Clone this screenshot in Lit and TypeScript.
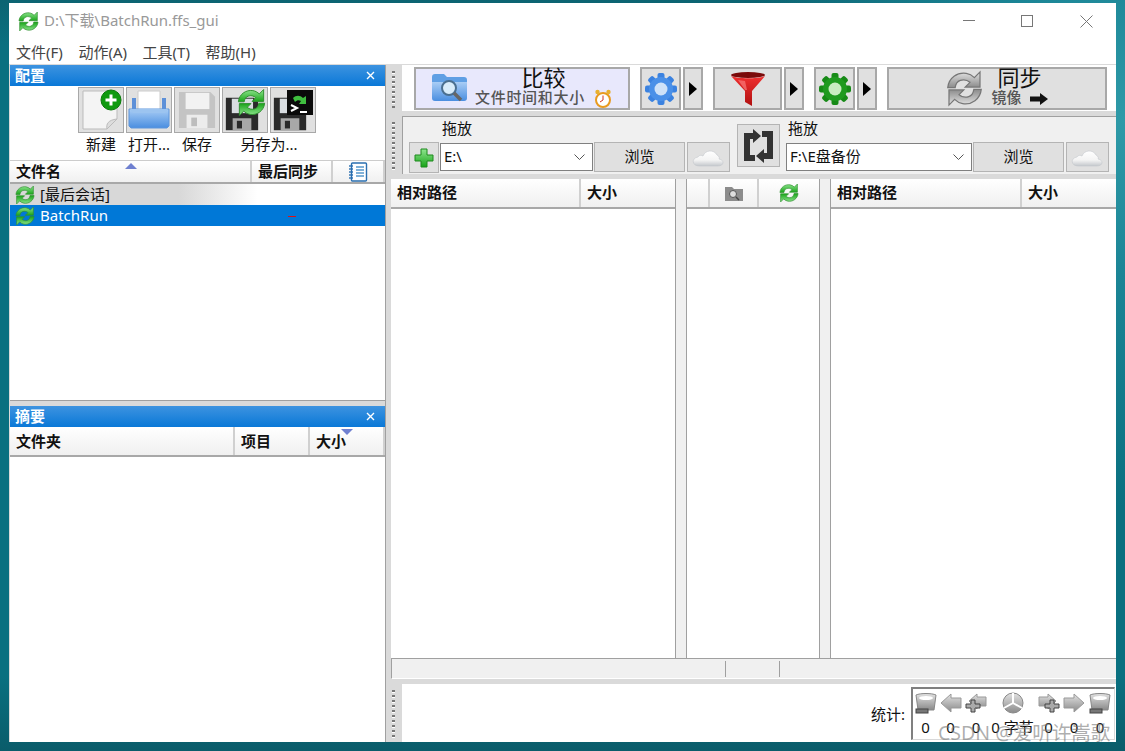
import { LitElement, html, svg, css } from "lit";
import { customElement } from "lit/decorators.js";

// shared sync arrows, top half is rotated for the bottom half
const arcPath =
  "M2.5 11.5C3 6 8 2.6 13 3.4c1.9.3 3.4 1.2 4.6 2.4L20.8 2.6v8.6h-8.4l2.7-2.7c-1.5-1.3-3.6-1.8-5.5-1.1-1.5.5-2.6 1.9-2.9 4.1z";
const syncPaths = (fill: string, stroke: string) => svg`
  <path fill=${fill} stroke=${stroke} stroke-width=".7" d=${arcPath}/>
  <path fill=${fill} stroke=${stroke} stroke-width=".7" transform="rotate(180 12 12)" d=${arcPath}/>
`;

const syncIcon = (size: number, gray = false) => html`<svg width=${size} height=${size} viewBox="1.5 1.5 21 21">
  ${gray ? syncPaths("url(#gsilver)", "#777") : syncPaths("url(#ggreen)", "#2f8f2f")}
</svg>`;

const gear = (outer: string, inner: string, hole: string) => {
  const teeth = [0, 45, 90, 135, 180, 225, 270, 315];
  return html`<svg width="34" height="34" viewBox="0 0 34 34">
    ${teeth.map((a) => svg`<rect x="13.5" y="1" width="7" height="8" rx="2" fill=${inner} transform="rotate(${a} 17 17)"/>`)}
    <circle cx="17" cy="17" r="12" fill=${outer}/>
    <circle cx="17" cy="17" r="6.5" fill=${hole}/>
  </svg>`;
};

// floppy in a 40x40 box, dark sides with a label on top and a shutter below
const floppy = (body: string, label: string, shutter: string, slot: string) => svg`
  <path fill=${body} d="M1 1h33l5 5v33H1z"/>
  <rect x="8" y="2" width="25" height="17" fill=${label}/>
  <rect x="9" y="25" width="22" height="14" fill=${shutter}/>
  <rect x="14" y="28" width="6" height="9" fill=${slot}/>
`;

const bucket = () => html`<svg width="22" height="23" viewBox="0 0 22 23">
  <path fill="url(#gsilver)" stroke="#888" d="M1 3c4-2 16-2 20 0l-2 15H3z"/>
  <ellipse cx="11" cy="6" rx="7" ry="2" fill="#fff"/>
  <rect x="1" y="17" width="12" height="4" fill="#777" stroke="#444"/>
</svg>`;

const arrowStat = (flip: boolean, plus: boolean) => html`<svg width="22" height="20" viewBox="0 0 22 20">
  <g transform=${flip ? "translate(22 0) scale(-1 1)" : ""}>
    ${plus
      ? svg`<path fill="url(#gsilver)" stroke="#999" d="M4 8L12 1v3h9v9h-9v3z"/>
            <path fill="#aaa" stroke="#444" d="M1 11h5V7h4v4h5v4h-5v4H6v-4H1z"/>`
      : svg`<path fill="url(#gsilver)" stroke="#999" d="M1 10L11 1v4h10v10H11v4z"/>`}
  </g>
</svg>`;

const cloud = () => html`<svg width="34" height="22" viewBox="0 0 34 22">
  <path fill="url(#gcloud)" stroke="#c4c8cc" stroke-width=".6" d="M7 20c-7 0-8-8-1-9 1-2 3-2 5-1 2-6 11-7 14-1 2 1 3 3 2 4 6 1 5 7-1 7z"/>
</svg>`;

@customElement("app-root")
export class AppRoot extends LitElement {
  static styles = css`
    :host {
      display: block;
      position: relative;
      width: 1125px;
      height: 751px;
      overflow: hidden;
      box-sizing: border-box;
      padding: 3px 9px 0 9px;
      font-family: "Noto Sans", "Noto Sans CJK SC", sans-serif;
      font-size: 15px;
      line-height: 20px;
      color: #111;
      background: radial-gradient(circle at 1125px 120px, #2f9aa8 0, #1b8596 12%, transparent 30%),
        linear-gradient(#0c6472, #0a7080 6%, #0a7080 90%, #0a5c6a);
    }
    svg { display: block; flex: none; }
    .defs { position: absolute; width: 0; height: 0; }
    .window {
      width: 1107px;
      height: 739px;
      background: #dadada;
      display: flex;
      flex-direction: column;
    }
    .title {
      height: 37px;
      background: #fff;
      display: flex;
      align-items: center;
      padding: 0 0 0 9px;
      color: #999;
      gap: 5px;
    }
    .title span { flex: 1; padding-bottom: 3px; }
    .winctl { display: flex; width: 153px; height: 100%; }
    .winctl svg { margin-top: 12px; }
    .menu {
      height: 24px;
      background: #fff;
      display: flex;
      gap: 15.6px;
      padding-left: 7px;
      align-items: center;
      color: #444;
    }
    .body { flex: 1; display: flex; min-height: 0; padding-top: 1px; }
    .left {
      width: 375px;
      margin-left: 1px;
      border-right: 1px solid #a0a0a0;
      display: flex;
      flex-direction: column;
      gap: 5px;
    }
    .pane { flex: none; background: #fff; display: flex; flex-direction: column; }
    .pane.config { height: 336px; border-bottom: 1px solid #a0a0a0; box-sizing: border-box; }
    .pane.summary { flex: 1; }
    .pane.summary .cell { padding-bottom: 0; }
    .caption {
      height: 21px;
      background: linear-gradient(#3d93e0, #0a78d7);
      color: #fff;
      display: flex;
      align-items: center;
      justify-content: space-between;
      padding: 0 10px 0 5px;
      font-weight: 700;
    }
    .caption span { padding-bottom: 2px; }
    .tools {
      height: 74px;
      box-sizing: border-box;
      padding: 1px 0 0 68px;
      display: grid;
      grid-template-columns: repeat(5, 46px);
      grid-template-rows: 46px auto;
      column-gap: 2px;
    }
    .tool {
      border: 1px solid #a8a8a8;
      background: #e0e0e0;
      display: flex;
      align-items: center;
      justify-content: center;
      box-sizing: border-box;
    }
    .tool-label { text-align: center; white-space: nowrap; line-height: 22px; }
    .span2 { grid-column: span 2; }
    .head {
      display: flex;
      background: linear-gradient(#fff, #f0f0f0);
      border-bottom: 2px solid #a8a8a8;
      box-sizing: border-box;
      position: relative;
      font-weight: 700;
    }
    .head.h24 { height: 24px; border-top: 1px solid #ccc; }
    .head.h30 { height: 30px; }
    .cell {
      display: flex;
      align-items: center;
      justify-content: flex-start;
      padding: 0 0 2px 6px;
      box-sizing: border-box;
      border-right: 2px solid #d0d0d0;
      flex: none;
      white-space: nowrap;
    }
    .cell:last-child { border-right: none; }
    .cell.center { justify-content: center; padding: 0; }
    .sort {
      position: absolute;
      width: 0;
      height: 0;
      border-left: 6px solid transparent;
      border-right: 6px solid transparent;
    }
    .sort.up { left: 115px; top: 2px; border-bottom: 6px solid #6f80d0; }
    .sort.down { left: 331px; top: 2px; border-top: 6px solid #6f80d0; }
    .row {
      height: 21px;
      display: flex;
      align-items: center;
      gap: 5px;
      padding-left: 5px;
      position: relative;
    }
    .row span { padding-bottom: 2px; }
    .row.last { background: linear-gradient(90deg, #d8d8d8 0, #d8d8d8 45%, #fff 66%); }
    .row.sel { background: #0078d7; color: #fff; }
    .dash { position: absolute; left: 278px; top: 11px; width: 8px; height: 1px; background: #e01010; }
    .right { flex: 1; display: flex; flex-direction: column; min-width: 0; margin-left: 1px; }
    .grip-col { width: 15px; flex: none; display: flex; justify-content: center; padding-right: 3px; box-sizing: border-box; }
    .grip {
      width: 3px;
      margin: 6px 0 3px 1px;
      background: repeating-linear-gradient(#777 0 2px, #fff 2px 3px, transparent 3px 5px);
    }
    .bar1 { height: 46px; display: flex; }
    .bar1-in {
      flex: 1;
      background: #fff;
      display: flex;
      gap: 2px;
      padding: 2px 9px 1px 12px;
    }
    .btn {
      border: 2px solid #a8a8a8;
      background: #e0e0e0;
      box-sizing: border-box;
      display: flex;
      align-items: center;
      justify-content: center;
      flex: none;
    }
    .compare { width: 216px; background: #e8e8fc; justify-content: flex-start; padding-left: 15px; gap: 7px; margin-right: 8px; }
    .stack { display: flex; flex-direction: column; align-items: center; margin-top: -7px; }
    .big { font-size: 22px; line-height: 24px; color: #111; }
    .small { display: flex; align-items: center; letter-spacing: 0.7px; color: #555; font-weight: 500; gap: 9px; height: 16px; }
    .small svg { margin-top: 3px; }
    .w41 { width: 41px; }
    .w20 { width: 20px; margin-right: 8px; }
    .w69 { width: 69px; }
    .tri { width: 0; height: 0; border-top: 7px solid transparent; border-bottom: 7px solid transparent; border-left: 8px solid #000; }
    .sync { width: 220px; gap: 8px; }
    .bar2 {
      height: 58px;
      margin-top: 5px;
      display: flex;
    }
    .bar2-in {
      flex: 1;
      background: #f0f0f0;
      border-top: 1px solid #a0a0a0;
      border-left: 1px solid #a0a0a0;
      box-sizing: border-box;
      padding: 0 7px 1px 6px;
      display: flex;
      align-items: flex-end;
    }
    .fbtn {
      border: 1px solid #b4b4b4;
      background: #e0e0e0;
      box-sizing: border-box;
      height: 31px;
      display: flex;
      align-items: center;
      justify-content: center;
      flex: none;
    }
    .plus { width: 30px; margin-right: 1px; }
    .folder { display: flex; flex-direction: column; }
    .drop { height: 25px; line-height: 23px; padding-left: 2px; }
    .frow { display: flex; align-items: flex-end; gap: 1px; }
    .combo {
      height: 28px;
      margin-bottom: 2px;
      background: #fff;
      border: 1px solid #808080;
      box-sizing: border-box;
      display: flex;
      align-items: center;
      justify-content: space-between;
      padding: 0 7px 0 3px;
    }
    .combo span { padding-bottom: 2px; }
    .combo.l { width: 153px; }
    .combo.r { width: 186px; }
    .browse { width: 91px; height: 30px; margin-bottom: 1px; padding-bottom: 2px; }
    .cl { width: 43px; height: 30px; margin-bottom: 1px; margin-left: 1px; }
    .swap { width: 43px; height: 43px; margin: 0 6px 6px 7px; align-self: flex-end; }
    .grid {
      flex: 1;
      margin-top: 5px;
      margin-left: 4px;
      display: flex;
      min-height: 0;
    }
    .col { background: #fff; flex: none; }
    .sep {
      width: 12px;
      flex: none;
      background: #f0f0f0;
      border-left: 1px solid #a0a0a0;
      border-right: 1px solid #a0a0a0;
      box-sizing: border-box;
    }
    .status {
      height: 21px;
      margin-left: 4px;
      background: #f0f0f0;
      border-top: 1px solid #a0a0a0;
      border-left: 1px solid #a0a0a0;
      border-bottom: 1px solid #fff;
      box-sizing: border-box;
      display: flex;
    }
    .status div { border-right: 1px solid #a0a0a0; margin: 2px 0 1px; box-sizing: border-box; }
    .bottom { height: 58px; margin-top: 5px; display: flex; }
    .bottom-in {
      flex: 1;
      background: #fff;
      display: flex;
      align-items: flex-start;
      justify-content: flex-end;
      gap: 6px;
      padding: 3px 1px 2px 0;
    }
    .stat-label { align-self: center; }
    .stats {
      width: 204px;
      height: 53px;
      box-sizing: border-box;
      border-top: 2px solid #808080;
      border-left: 2px solid #808080;
      border-right: 1px solid #d8d8d8;
      border-bottom: 1px solid #d8d8d8;
      display: grid;
      grid-template-columns: 25px 25px 26px 47px 25px 26px 26px;
      grid-template-rows: 28px auto;
      justify-items: center;
      align-items: center;
    }
    .stats span { color: #111; white-space: nowrap; margin-top: -3px; }
    .mark {
      position: absolute;
      left: 938px;
      top: 720px;
      font-size: 19.5px;
      line-height: 26px;
      color: rgba(120, 120, 120, 0.6);
      white-space: nowrap;
    }
  `;

  render() {
    return html`
      <svg class="defs">
        <defs>
          <linearGradient id="ggreen" x1="0" y1="0" x2="0" y2="1">
            <stop offset="0" stop-color="#8fe58f" /><stop offset="1" stop-color="#17a317" />
          </linearGradient>
          <linearGradient id="gsilver" x1="0" y1="0" x2="0" y2="1">
            <stop offset="0" stop-color="#e2e2e2" /><stop offset="1" stop-color="#8a8a8a" />
          </linearGradient>
          <linearGradient id="gcloud" x1="0" y1="0" x2="0" y2="1">
            <stop offset="0" stop-color="#fff" /><stop offset=".6" stop-color="#f4f4f4" /><stop offset="1" stop-color="#c4c8cc" />
          </linearGradient>
          <linearGradient id="gblue" x1="0" y1="0" x2="0" y2="1">
            <stop offset="0" stop-color="#a9cdf5" /><stop offset="1" stop-color="#4a8ee0" />
          </linearGradient>
          <linearGradient id="gred" x1="0" y1="0" x2="0" y2="1">
            <stop offset="0" stop-color="#f03030" /><stop offset="1" stop-color="#b01010" />
          </linearGradient>
        </defs>
      </svg>
      <div class="window">
        <div class="title">
          ${syncIcon(21)}
          <span>D:\\下载\\BatchRun.ffs_gui</span>
          <div class="winctl">
            <svg width="58" height="14" viewBox="0 0 58 14"><path d="M0 5.5h12" stroke="#777" /></svg>
            <svg width="59" height="14" viewBox="0 0 59 14"><rect x=".5" y=".5" width="11" height="11" fill="none" stroke="#777" /></svg>
            <svg width="14" height="14" viewBox="0 0 14 14"><path d="M.5.5l12 12M12.5.5l-12 12" stroke="#777" /></svg>
          </div>
        </div>
        <div class="menu"><span>文件(F)</span><span>动作(A)</span><span>工具(T)</span><span>帮助(H)</span></div>
        <div class="body">
          <div class="left">
            <div class="pane config">
              <div class="caption"><span>配置</span>${this.closeX()}</div>
              <div class="tools">
                <div class="tool">${this.iconNew()}</div>
                <div class="tool">${this.iconOpen()}</div>
                <div class="tool">${this.iconSave()}</div>
                <div class="tool">${this.iconSaveAs()}</div>
                <div class="tool">${this.iconBatch()}</div>
                <div class="tool-label">新建</div>
                <div class="tool-label">打开...</div>
                <div class="tool-label">保存</div>
                <div class="tool-label span2">另存为...</div>
              </div>
              <div class="head h24">
                <div class="cell" style="width:242px">文件名</div>
                <div class="cell" style="width:81px">最后同步</div>
                <div class="cell center" style="width:52px">${this.iconNotes()}</div>
                <div class="sort up"></div>
              </div>
              <div class="row last">${syncIcon(20)}<span>[最后会话]</span></div>
              <div class="row sel">${syncIcon(20)}<span>BatchRun</span><div class="dash"></div></div>
            </div>
            <div class="pane summary">
              <div class="caption"><span>摘要</span>${this.closeX()}</div>
              <div class="head h30">
                <div class="cell" style="width:225px">文件夹</div>
                <div class="cell" style="width:75px">项目</div>
                <div class="cell" style="width:75px">大小</div>
                <div class="sort down"></div>
              </div>
            </div>
          </div>
          <div class="right">
            <div class="bar1">
              <div class="grip-col"><div class="grip"></div></div>
              <div class="bar1-in">
                <div class="btn compare">
                  ${this.iconFolder()}
                  <div class="stack">
                    <div class="big">比较</div>
                    <div class="small"><span>文件时间和大小</span>${this.iconClock()}</div>
                  </div>
                </div>
                <div class="btn w41">${gear("#4a90e8", "#3b82e0", "#cfe2f8")}</div>
                <div class="btn w20"><div class="tri"></div></div>
                <div class="btn w69">${this.iconFunnel()}</div>
                <div class="btn w20"><div class="tri"></div></div>
                <div class="btn w41">${gear("#1f9a1f", "#178a17", "#c8ecc0")}</div>
                <div class="btn w20"><div class="tri"></div></div>
                <div class="btn sync">
                  ${syncIcon(37, true)}
                  <div class="stack">
                    <div class="big">同步</div>
                    <div class="small" style="letter-spacing:0;gap:8px">
                      <span>镜像</span>
                      <svg width="18" height="12" viewBox="0 0 18 12"><path d="M0 3.5h10V0l8 6-8 6V8.5H0z" fill="#111" /></svg>
                    </div>
                  </div>
                </div>
              </div>
            </div>
            <div class="bar2">
              <div class="grip-col"><div class="grip"></div></div>
              <div class="bar2-in">
                <div class="fbtn plus">
                  <svg width="20" height="20" viewBox="0 0 20 20"><path d="M7 1h6v6h6v6h-6v6H7v-6H1V7h6z" fill="url(#ggreen)" stroke="#1d8a1d" /></svg>
                </div>
                <div class="folder">
                  <div class="drop">拖放</div>
                  <div class="frow">
                    <div class="combo l"><span>E:\\</span>${this.chevron()}</div>
                    <div class="fbtn browse">浏览</div>
                    <div class="fbtn cl">${cloud()}</div>
                  </div>
                </div>
                <div class="fbtn swap">
                  <svg width="29" height="34" viewBox="0 0 29 34">
                    <path fill="#333" d="M0 32V4h9V0l8 7-8 7v-4H6v16h5v6z" />
                    <path fill="#333" transform="rotate(180 14.5 17)" d="M0 32V4h9V0l8 7-8 7v-4H6v16h5v6z" />
                  </svg>
                </div>
                <div class="folder">
                  <div class="drop">拖放</div>
                  <div class="frow">
                    <div class="combo r"><span>F:\\E盘备份</span>${this.chevron()}</div>
                    <div class="fbtn browse">浏览</div>
                    <div class="fbtn cl">${cloud()}</div>
                  </div>
                </div>
              </div>
            </div>
            <div class="grid">
              <div class="col" style="width:284px">
                <div class="head h30">
                  <div class="cell" style="width:190px">相对路径</div>
                  <div class="cell" style="width:94px">大小</div>
                </div>
              </div>
              <div class="sep"></div>
              <div class="col" style="width:132px">
                <div class="head h30">
                  <div class="cell" style="width:23px"></div>
                  <div class="cell center" style="width:49px">
                    <svg width="20" height="18" viewBox="0 0 20 18">
                      <path fill="#8c8c8c" d="M1 3h7l2 2h9v12H1z" />
                      <circle cx="9" cy="10" r="3.5" fill="#ddd" stroke="#555" />
                      <path d="M12 13l3 3" stroke="#444" stroke-width="1.5" />
                    </svg>
                  </div>
                  <div class="cell center" style="width:60px">${syncIcon(20)}</div>
                </div>
              </div>
              <div class="sep"></div>
              <div class="col" style="width:285px">
                <div class="head h30">
                  <div class="cell" style="width:191px">相对路径</div>
                  <div class="cell" style="width:94px">大小</div>
                </div>
              </div>
            </div>
            <div class="status">
              <div style="width:334px"></div>
              <div style="width:54px"></div>
            </div>
            <div class="bottom">
              <div class="grip-col"><div class="grip"></div></div>
              <div class="bottom-in">
                <div class="stat-label">统计:</div>
                <div class="stats">
                  ${bucket()} ${arrowStat(false, false)} ${arrowStat(false, true)}
                  ${this.iconPie()}
                  ${arrowStat(true, true)} ${arrowStat(true, false)} ${bucket()}
                  <span>0</span><span>0</span><span>0</span><span>0 字节</span><span>0</span><span>0</span><span>0</span>
                </div>
              </div>
            </div>
          </div>
        </div>
      </div>
      <div class="mark">CSDN @爱听许嵩歌</div>
    `;
  }

  private closeX() {
    return html`<svg width="9" height="9" viewBox="0 0 9 9"><path d="M1 1l7 7M8 1L1 8" stroke="#fff" stroke-width="1.4" /></svg>`;
  }

  private chevron() {
    return html`<svg width="11" height="6" viewBox="0 0 11 6"><path d="M.5.5l5 5 5-5" fill="none" stroke="#555" /></svg>`;
  }

  private iconNew() {
    return html`<svg width="44" height="44" viewBox="0 0 44 44">
      <path fill="#f4f4f4" stroke="#bbb" d="M4 3h26l8 10v18L28 41H4z" />
      <path fill="#ddd" stroke="#bbb" d="M28 41c-1-5 1-9 10-10z" />
      <circle cx="32" cy="12" r="10" fill="#0e9a0e" stroke="#0a7a0a" />
      <path d="M32 6.5v11M26.5 12h11" stroke="#fff" stroke-width="3" />
    </svg>`;
  }

  private iconOpen() {
    return html`<svg width="44" height="44" viewBox="0 0 44 44">
      <path fill="#5d90d8" d="M5 10h4v14H5zM35 10h4v14h-4z" />
      <path fill="#fff" stroke="#ccc" d="M11 3h22v22H11z" />
      <path fill="url(#gblue)" stroke="#5f96dc" d="M2 21h40v17l-2 2H4l-2-2z" />
      <path fill="#9cc4f0" d="M3 21h38l-3 4H6z" />
    </svg>`;
  }

  private iconSave() {
    return html`<svg width="38" height="38" viewBox="0 0 40 40">
      ${floppy("#c4c4c4", "#f2f2f2", "#ececec", "#bdbdbd")}
    </svg>`;
  }

  private iconSaveAs() {
    return html`<svg width="44" height="44" viewBox="0 0 44 44">
      <svg x="2" y="9" width="34" height="34" viewBox="0 0 40 40">${floppy("#2a2a2a", "#d8dce0", "#a8a8a8", "#2a2a2a")}</svg>
      <svg x="14" y="0" width="29" height="29" viewBox="1.5 1.5 21 21">${syncPaths("url(#ggreen)", "#2f8f2f")}</svg>
    </svg>`;
  }

  private iconBatch() {
    return html`<svg width="44" height="44" viewBox="0 0 44 44">
      <svg x="2" y="9" width="34" height="34" viewBox="0 0 40 40">${floppy("#2a2a2a", "#d8dce0", "#a8a8a8", "#2a2a2a")}</svg>
      <rect x="16" y="2" width="26" height="25" fill="#0a0a0a" />
      <path d="M22 10c3-3 7-3 10 0l3-2v8h-7l2-3c-2-1-4-1-6 1z" fill="#3fbf3f" />
      <path d="M20 17l6 3-6 3" fill="none" stroke="#fff" stroke-width="2" />
      <path d="M29 24h7" stroke="#fff" stroke-width="2" />
    </svg>`;
  }

  private iconNotes() {
    return html`<svg width="20" height="20" viewBox="0 0 20 20">
      <rect x="3.5" y="1" width="15" height="18" rx="1" fill="#fff" stroke="#2a6fb0" stroke-width="1.4" />
      ${[4, 7, 10, 13, 16].map((y) => svg`<path d="M1 ${y}h4" stroke="#2a6fb0" stroke-width="1.4" />`)}
      ${[5, 8, 11, 14].map((y) => svg`<path d="M8 ${y}h8" stroke="#4a90c8" stroke-width="1.4" />`)}
    </svg>`;
  }

  private iconFolder() {
    return html`<svg width="37" height="33" viewBox="0 0 37 33">
      <path fill="#5f9fe4" d="M1 5c0-2 1-3 3-3h9l3 3h17c2 0 3 1 3 3v4H1z" />
      <path fill="url(#gblue)" d="M1 10h35v16c0 2-1 3-3 3H4c-2 0-3-1-3-3z" />
      <circle cx="18" cy="16" r="7" fill="#d8ecfa" stroke="#4a6f90" stroke-width="2" />
      <path d="M23 21l7 7" stroke="#666" stroke-width="3.5" />
    </svg>`;
  }

  private iconClock() {
    return html`<svg width="18" height="19" viewBox="0 0 18 19">
      <circle cx="9" cy="11" r="7" fill="#fff" stroke="#e89a20" stroke-width="2" />
      <path d="M9 6.5V11l-3 2" fill="none" stroke="#d03020" />
      <circle cx="3.5" cy="3" r="2.2" fill="#e8b030" />
      <circle cx="14.5" cy="3" r="2.2" fill="#e8b030" />
    </svg>`;
  }

  private iconFunnel() {
    return html`<svg width="36" height="38" viewBox="0 0 36 38">
      <ellipse cx="18" cy="5" rx="17" ry="3" fill="#7a0a0a" />
      <path fill="url(#gred)" d="M1 6c6 3 28 3 34 0L22 21v15l-7-4V21z" />
      <path fill="#f88" opacity=".6" d="M8 10l7 1 2 9h-2z" />
    </svg>`;
  }

  private iconPie() {
    return html`<svg width="22" height="22" viewBox="0 0 22 22">
      <circle cx="11" cy="11" r="10" fill="url(#gsilver)" stroke="#888" />
      <path d="M11 11V1M11 11l9 5M11 11L2 16" stroke="#fff" stroke-width="2" />
    </svg>`;
  }
}
